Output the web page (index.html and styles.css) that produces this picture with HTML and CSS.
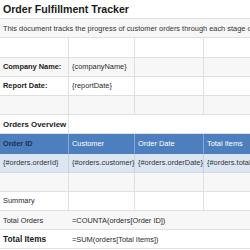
FILE: index.html
```html
<!DOCTYPE html>
<html>
<head>
<meta charset="utf-8">
<link rel="stylesheet" href="styles.css">
</head>
<body>
<div class="sheet">
  <div class="cell span4 title">Order Fulfillment Tracker</div>

  <div class="cell span4 alt desc">This document tracks the progress of customer orders through each stage of</div>

  <div class="cell"></div><div class="cell"></div><div class="cell"></div><div class="cell"></div>

  <div class="cell alt label">Company Name:</div><div class="cell alt">{companyName}</div><div class="cell alt"></div><div class="cell alt"></div>

  <div class="cell label">Report Date:</div><div class="cell">{reportDate}</div><div class="cell"></div><div class="cell"></div>

  <div class="cell alt"></div><div class="cell alt"></div><div class="cell alt"></div><div class="cell alt"></div>

  <div class="cell section">Orders Overview</div><div class="cell span3"></div>

  <div class="cell head head-key">Order ID</div><div class="cell head">Customer</div><div class="cell head">Order Date</div><div class="cell head">Total Items</div>

  <div class="cell data">{#orders.orderId}</div><div class="cell data">{#orders.customer}</div><div class="cell data">{#orders.orderDate}</div><div class="cell data">{#orders.totalItems}</div>

  <div class="cell alt"></div><div class="cell alt"></div><div class="cell alt"></div><div class="cell alt"></div>

  <div class="cell">Summary</div><div class="cell"></div><div class="cell"></div><div class="cell"></div>

  <div class="cell alt noline">Total Orders</div><div class="cell alt span3">=COUNTA(orders[Order ID])</div>

  <div class="cell noline total">Total Items</div><div class="cell span3">=SUM(orders[Total Items])</div>
</div>
</body>
</html>
```

FILE: styles.css
```css
html, body {
  margin: 0;
  padding: 0;
  overflow: hidden;
  background: #ffffff;
}

.sheet {
  display: grid;
  grid-template-columns: 69px 66px 69px 120px;
  grid-auto-rows: 19.2px;
  width: 324px;
  font-family: "Liberation Sans", Arial, sans-serif;
  font-size: 7.4px;
  color: #2a2a2a;
}

.cell {
  box-sizing: border-box;
  border-right: 1px solid #e0e0e0;
  border-bottom: 1px solid #e0e0e0;
  padding: 0 3px 0 3px;
  display: flex;
  align-items: center;
  white-space: nowrap;
  overflow: visible;
  min-width: 0;
  background: #ffffff;
}

.span4 { grid-column: span 4; border-right: none; }
.span3 { grid-column: span 3; border-right: none; }
.alt { background: #f7f7f7; }
.noline { border-right: none; }

.title {
  font-size: 10.6px;
  font-weight: bold;
  color: #1a1a1a;
}

.desc { color: #333333; }

.label {
  font-weight: bold;
  color: #222222;
}

.section {
  font-size: 7.9px;
  font-weight: bold;
  color: #1a1a1a;
}

.head {
  background: #4d7fbf;
  color: #ffffff;
  border-right-color: #86a7d4;
  border-bottom-color: #4d7fbf;
}

.head-key {
  font-weight: bold;
  color: #1d2f4d;
}

.data {
  background: #dce6f2;
  border-right-color: #c5d3e6;
  border-bottom-color: #d0dbe9;
  color: #333333;
}

.total {
  font-size: 8.3px;
  font-weight: bold;
  color: #1a1a1a;
}
```
